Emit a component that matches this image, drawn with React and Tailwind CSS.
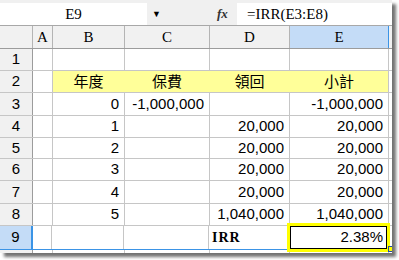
import React from "react";

// widths of: row header, A, B, C, D, E
const colW = ["w-[33px]", "w-[20px]", "w-[72px]", "w-[85px]", "w-[80px]", "w-[99px]"];
const rowH = ["h-[22px]", "h-[22px]", "h-[23px]", "h-[22px]", "h-[21px]", "h-[22px]", "h-[23px]", "h-[22px]"];

const rows = [
  { n: 1, cells: ["", "", "", "", ""] },
  { n: 2, cells: ["", "年度", "保費", "領回", "小計"], head: true },
  { n: 3, cells: ["", "0", "-1,000,000", "", "-1,000,000"] },
  { n: 4, cells: ["", "1", "", "20,000", "20,000"] },
  { n: 5, cells: ["", "2", "", "20,000", "20,000"] },
  { n: 6, cells: ["", "3", "", "20,000", "20,000"] },
  { n: 7, cells: ["", "4", "", "20,000", "20,000"] },
  { n: 8, cells: ["", "5", "", "1,040,000", "1,040,000"] },
];

const sans = "font-['Liberation_Sans',Arial,sans-serif]";
const serif = "font-['Liberation_Serif','Times_New_Roman',serif]";
const cjk = "font-['Noto_Sans_CJK_TC','Noto_Sans_CJK_SC',sans-serif]";

export default function App() {
  return (
    <div className="w-[399px] h-[260px] bg-white">
      <div className="w-[392px] h-[253px] overflow-hidden bg-white shadow-[4px_4px_3px_rgba(0,0,0,0.55)]">
        {/* Formula bar */}
        <div className="h-[26px] bg-[#f0f0f0] pt-[3px] flex border-b border-[#a8a8a8]">
          <div className={`w-[147px] h-[22px] bg-white flex items-center justify-center text-[15px] text-black ${serif}`}>
            E9
          </div>
          <div className="w-[90px] h-[22px] flex items-center">
            <span className="ml-[5px] text-[9px] text-black">▼</span>
            <span className={`ml-[56px] text-[13px] italic font-bold text-[#333] ${serif}`}>fx</span>
          </div>
          <div className={`flex-1 h-[22px] bg-white flex items-center pl-[10px] text-[15px] text-black ${serif}`}>
            =IRR(E3:E8)
          </div>
        </div>

        {/* Column header */}
        <div className="flex h-[23px] bg-[#f1f1f1] border-b border-[#9c9c9c]">
          {["", "A", "B", "C", "D", "E"].map((c, i) => (
            <div
              key={i}
              className={`${colW[i]} shrink-0 flex items-center justify-center text-[15px] text-black border-r ${serif} ${
                c === "E" ? "bg-[#c4dcf7] border-[#3b94e6]" : "border-[#b4b4b4]"
              }`}
            >
              {c}
            </div>
          ))}
          <div className="flex-1" />
        </div>

        {/* Rows 1-8 */}
        {rows.map((r, ri) => (
          <div key={r.n} className={`flex border-b border-[#c6c6c6] ${rowH[ri]}`}>
            <div className={`${colW[0]} shrink-0 bg-[#f1f1f1] border-r border-[#9c9c9c] flex items-center justify-center text-[15px] text-black ${sans}`}>
              {r.n}
            </div>
            {r.cells.map((c, ci) => {
              const yellow = r.head && ci > 0;
              return (
                <div
                  key={ci}
                  className={`${colW[ci + 1]} shrink-0 flex items-center text-[15px] text-black border-r ${
                    r.head ? `justify-center ${cjk}` : `justify-end pr-[5px] ${sans}`
                  } ${yellow ? "bg-[#ffff99]" : ""} ${yellow && ci < 4 ? "border-[#ffff99]" : "border-[#c6c6c6]"}`}
                >
                  {c}
                </div>
              );
            })}
            <div className="flex-1" />
          </div>
        ))}

        {/* Row 9 */}
        <div className="flex h-[24px] border-b border-[#3b94e6]">
          <div className={`${colW[0]} shrink-0 bg-[#c4dcf7] border-r-2 border-[#3b94e6] flex items-center justify-center text-[15px] text-black ${sans}`}>
            9
          </div>
          <div className="w-[19px] shrink-0 border-r border-[#c6c6c6]" />
          <div className={`${colW[2]} shrink-0 border-r border-[#c6c6c6]`} />
          <div className={`${colW[3]} shrink-0 border-r border-[#c6c6c6]`} />
          <div className={`${colW[4]} shrink-0 border-r border-[#c6c6c6] flex items-center pl-[3px] text-[14px] font-bold text-black tracking-[1px] ${serif}`}>
            IRR
          </div>
          <div className={`${colW[5]} shrink-0 relative`}>
            <div className="absolute left-[-2px] top-[-3px] w-[103px] h-[29px] border-[3px] border-[#ffff00]">
              <div className={`w-full h-full border border-black flex items-center justify-end pr-[3px] text-[15px] text-black ${sans}`}>
                2.38%
              </div>
            </div>
            <div className="absolute right-[-6px] bottom-[-3px] w-[6px] h-[6px] bg-[#ffff00] border border-[#1f4fa0]" />
          </div>
          <div className="flex-1" />
        </div>

        {/* Row 10 (cut off) */}
        <div className="flex h-[4px]">
          <div className={`${colW[0]} shrink-0 bg-[#f1f1f1] border-r border-[#9c9c9c]`} />
          {colW.slice(1).map((w, i) => (
            <div key={i} className={`${w} shrink-0 border-r border-[#c6c6c6]`} />
          ))}
        </div>
      </div>
    </div>
  );
}
